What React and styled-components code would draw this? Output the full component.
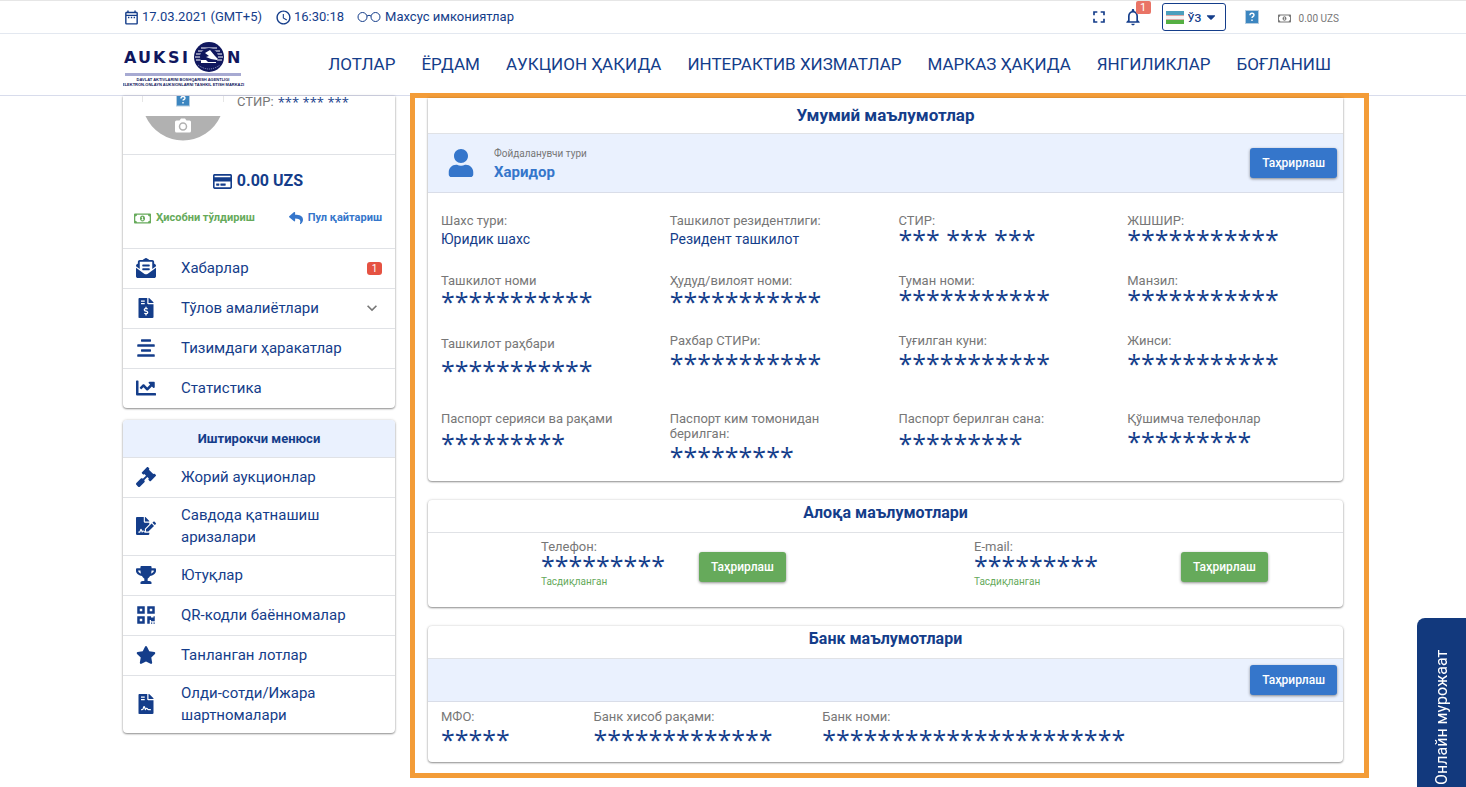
import React from "react";
import styled, { createGlobalStyle } from "styled-components";
import {
  FaEnvelopeOpenText,
  FaFileInvoiceDollar,
  FaAlignCenter,
  FaChartLine,
  FaGavel,
  FaFileSignature,
  FaTrophy,
  FaQrcode,
  FaStar,
  FaFileContract,
  FaRegCreditCard,
  FaReply,
  FaRegMoneyBillAlt,
  FaUser,
  FaCaretDown,
} from "react-icons/fa";
import {
  MdOutlineDateRange,
  MdAccessTime,
  MdFullscreen,
  MdNotificationsNone,
  MdExpandMore,
} from "react-icons/md";

const navy = "#143d8a";
const blue = "#3576cb";
const green = "#66aa5b";
const pale = "#eaf1fe";
const line = "#e0e2e6";
const grey = "#777";

const GlobalStyle = createGlobalStyle`
  * { box-sizing: border-box; }
  body {
    margin: 0;
    background: #fff;
    color: ${navy};
    font: 13px/20px Roboto, "Liberation Sans", sans-serif;
  }
  h2, h3, ul, dl, dd, p { margin: 0; padding: 0; }
  ul { list-style: none; }
  a { color: inherit; text-decoration: none; }
  button, select { font: inherit; color: inherit; }
  svg { display: block; flex: none; }
`;

const Wrap = styled.div`
  max-width: 1220px;
  margin: 0 auto;
`;

const Header = styled.header`
  background: #fff;
  border-top: 1px solid #e6e6e6;
  border-bottom: 1px solid #d8dcec;
`;

const TopBar = styled.div`
  border-bottom: 1px solid #e3e8f0;
`;

const TopBarInner = styled(Wrap)`
  display: flex;
  justify-content: space-between;
  height: 32px;
  align-items: center;
`;

const TopGroup = styled.div`
  display: flex;
  align-items: center;
  gap: 13px;
`;

const TopItem = styled.span`
  display: flex;
  align-items: center;
  gap: 2px;
`;

const TopLink = styled.a`
  display: flex;
  align-items: center;
  gap: 4px;
`;

const TopTools = styled.div`
  display: flex;
  align-items: center;
  gap: 19px;
  padding-right: 4px;
`;

const TopButtons = styled.div`
  display: flex;
  align-items: center;
  gap: 14px;
`;

const IconButton = styled.button`
  position: relative;
  display: flex;
  padding: 0;
  border: 0;
  background: none;
  cursor: pointer;
`;

const Bubble = styled.span`
  position: absolute;
  top: -6px;
  right: -8px;
  width: 15px;
  border-radius: 2px;
  background: #e97466;
  color: #fff;
  font-size: 11px;
  line-height: 13px;
  text-align: center;
`;

const Language = styled.label`
  position: relative;
  display: flex;
  align-items: center;
  height: 28px;
  border: 1px solid ${navy};
  border-radius: 3px;
  svg {
    position: absolute;
    pointer-events: none;
  }
  svg:first-child { left: 3px; }
  svg:last-child { right: 7px; }
`;

const LanguageSelect = styled.select`
  width: 62px;
  height: 26px;
  padding: 3px 0 0 25px;
  border: 0;
  background: none;
  appearance: none;
  font-size: 11px;
  font-weight: 500;
`;

const Account = styled.span`
  display: flex;
  align-items: center;
  gap: 8px;
  padding-top: 3px;
  color: ${grey};
  font-size: 10px;
`;

const NavInner = styled(Wrap)`
  display: flex;
  justify-content: space-between;
  align-items: center;
  height: 61px;
  padding-right: 12px;
`;

const Nav = styled.nav`
  display: flex;
  gap: 26px;
  font-size: 17px;
  line-height: 24px;
  padding-bottom: 2px;
  white-space: nowrap;
`;

const Content = styled(Wrap)`
  display: grid;
  grid-template-columns: 272px minmax(0, 1fr);
  gap: 15px;
  align-items: start;
`;

const Sidebar = styled.aside`
  display: flex;
  flex-direction: column;
  gap: 12px;
`;

const Card = styled.section`
  border-radius: ${(p) => (p.$joined ? "0 0 4px 4px" : "4px")};
  background: #fff;
  box-shadow: 0 1px 2px rgba(0, 0, 0, 0.4), 0 0 3px rgba(0, 0, 0, 0.16);
`;

const Profile = styled.div`
  display: flex;
  gap: 13px;
  height: 58px;
  padding-left: 19px;
`;

const ProfileId = styled.p`
  display: flex;
  gap: 4px;
  height: 12px;
  align-items: center;
  color: ${grey};
`;

const Balance = styled.div`
  display: flex;
  flex-direction: column;
  justify-content: space-between;
  height: 94px;
  padding: 16px 13px 20px 11px;
  border-top: 1px solid ${line};
`;

const Amount = styled.p`
  display: flex;
  justify-content: center;
  align-items: center;
  gap: 5px;
  font-size: 16px;
  font-weight: 700;
`;

const BalanceLinks = styled.div`
  display: flex;
  justify-content: space-between;
`;

const BalanceLink = styled.a`
  display: flex;
  align-items: center;
  gap: 5px;
  color: ${(p) => p.$color};
  font-size: 11px;
  font-weight: 700;
`;

const MenuTitle = styled.h2`
  padding: 8px;
  border-radius: 4px 4px 0 0;
  background: ${pale};
  font-size: 13px;
  line-height: 21px;
  text-align: center;
`;

const MenuLink = styled.a`
  display: grid;
  grid-template-columns: 46px 1fr auto;
  align-items: center;
  column-gap: 12px;
  min-height: 40px;
  padding: 6px 13px 7px 0;
  border-top: 1px solid ${line};
  font-size: 15px;
  line-height: 22px;
  svg {
    width: auto;
    height: 20px;
    justify-self: center;
  }
`;

const MenuBadge = styled.span`
  width: 15px;
  border-radius: 3px;
  background: #e55242;
  color: #fff;
  font-size: 10px;
  line-height: 13px;
  text-align: center;
`;

const Frame = styled.main`
  position: relative;
  display: flex;
  flex-direction: column;
  gap: 19px;
  margin: -3px -26px 9px 0;
  padding: 0 21px 11px 13px;
  border: 5px solid #f39c38;
  background: #fff;
`;

const CardTitle = styled.h3`
  padding: ${(p) => (p.$first ? "4px 0 5px" : "0 0 6px")};
  border-bottom: 1px solid ${line};
  font-size: ${(p) => (p.$first ? "17px" : "16px")};
  line-height: 26px;
  text-align: center;
`;

const Banner = styled.div`
  display: flex;
  align-items: center;
  gap: 19px;
  height: ${(p) => (p.$tall ? "59px" : "43px")};
  padding: 0 6px 0 19px;
  border-bottom: 1px solid #d9dde8;
  background: ${pale};
`;

const UserKind = styled.p`
  font-size: 15px;
  font-weight: 700;
  line-height: 18px;
  color: ${blue};
`;

const UserKindLabel = styled.span`
  display: block;
  font-size: 10px;
  font-weight: 400;
  color: ${grey};
`;

const EditButton = styled.button`
  height: 30px;
  padding: 0 12px;
  border: 0;
  border-radius: 3px;
  background: ${(p) => p.$color};
  box-shadow: 0 1px 3px rgba(0, 0, 0, 0.45);
  color: #fff;
  font-size: 12px;
  font-weight: 500;
  cursor: pointer;
`;

const Push = styled.div`
  margin-left: auto;
`;

const FieldGrid = styled.dl`
  display: grid;
  grid-template-columns: repeat(4, 1fr);
  grid-template-rows: 60px 60px 78px auto;
  padding: 20px 0 14px 13px;
  margin-right: -13px;
`;

const Field = styled.div`
  display: flex;
  flex-direction: column;
  gap: ${(p) => (p.$gap || 0) + "px"};
  padding: ${(p) => (p.$low ? "3px" : "0")} 45px 0 0;
`;

const Label = styled.dt`
  font-size: 13px;
  line-height: 15px;
  color: ${grey};
`;

const Value = styled.dd`
  font-size: 14px;
  line-height: 22px;
`;

const Masked = styled.dd`
  height: 22px;
  font-family: "Open Sans", "Noto Sans", sans-serif;
  font-size: 25px;
  line-height: 22px;
  white-space: nowrap;
`;

const MaskedSmall = styled.span`
  color: ${navy};
  font-family: "Open Sans", "Noto Sans", sans-serif;
  font-size: 13px;
  line-height: 20px;
`;

const Contacts = styled.div`
  display: grid;
  grid-template-columns: 158fr 275fr 207fr 162fr;
  align-items: start;
  justify-items: start;
  padding: 6px 0 20px 113px;
`;

const ContactButton = styled.div`
  padding-top: 13px;
`;

const Confirmed = styled.dd`
  font-size: 10px;
  line-height: 11px;
  color: ${green};
`;

const BankGrid = styled.dl`
  display: grid;
  grid-template-columns: 2fr 3fr 7fr;
  padding: 7px 0 12px 13px;
  margin-right: -13px;
`;

const SupportTab = styled.button`
  position: fixed;
  right: 0;
  bottom: 0;
  width: 49px;
  height: 169px;
  padding: 0 0 2px;
  border: 0;
  border-radius: 8px 0 0 0;
  background: #12397d;
  color: #fff;
  font-size: 16px;
  cursor: pointer;
`;

const SupportText = styled.span`
  display: block;
  width: 49px;
  height: 167px;
  line-height: 49px;
  text-align: left;
  writing-mode: vertical-rl;
  transform: rotate(180deg);
`;

function Logo() {
  return (
    <svg width="122" height="48" viewBox="1 2 122 48" role="img" aria-label="Auksion">
      <g fill="#10175e" fontFamily="'DejaVu Sans', sans-serif" fontWeight="700">
        <text x="2 16 31 46 60" y="24" fontSize="16">AUKSI</text>
        <text x="105" y="24" fontSize="16">N</text>
        <text x="61" y="42" fontSize="4" textAnchor="middle" fontFamily="'Liberation Sans', sans-serif">
          DAVLAT AKTIVLARINI BOSHQARISH AGENTLIGI
        </text>
        <text x="61" y="47" fontSize="4" textAnchor="middle" fontFamily="'Liberation Sans', sans-serif">
          ELEKTRON-ONLAYN AUKSIONLARNI TASHKIL ETISH MARKAZI
        </text>
      </g>
      <rect x="3" y="34" width="116" height="3" fill="#a7aad2" />
      <circle cx="87" cy="18" r="15" fill="#10175e" />
      <path d="M79 9h16M76 12h6M92 12h6M74 15h6M94 15h6M73 18h6M95 18h6M74 21h6M94 21h6" stroke="#fff" strokeWidth="1" />
      <circle cx="87" cy="18" r="9" fill="#10175e" />
      <path d="M83 14l5-3 5 6 3 3-1 1-6-1-5-2 3-1z" fill="#fff" />
      <path d="M79 21h5l2 2h8v1H79z" fill="#fff" />
      <path d="M76 26q11 8 22 0" fill="none" stroke="#9ba0cb" strokeWidth="1" strokeDasharray="1 1" />
    </svg>
  );
}

function Glasses() {
  return (
    <svg width="24" height="12" viewBox="0 0 24 12" fill="none" stroke={navy}>
      <circle cx="5.5" cy="6" r="4.5" />
      <circle cx="18.5" cy="6" r="4.5" />
      <path d="M10 5q2-1.500 4 0" />
    </svg>
  );
}

function MissingImage() {
  return (
    <svg width="14" height="14" viewBox="0 0 14 14">
      <rect x="0.5" y="0.5" width="13" height="13" fill="#3c86c0" stroke="#b5cde0" />
      <path d="M5 5.200q0-2 2-2t2 1.800q0 1-1 1.500t-1 1.500M7 9.500v1.500" fill="none" stroke="#fff" strokeWidth="1.400" />
    </svg>
  );
}

function Flag() {
  return (
    <svg width="18" height="13" viewBox="0 0 18 13">
      <rect width="18" height="13" fill="#f4f4f4" />
      <rect width="18" height="4" fill="#4b9fbd" />
      <path d="M0 4.500h18M0 8.500h18" stroke="#dcaaa8" />
      <rect y="9" width="18" height="4" fill="#55b043" />
    </svg>
  );
}

function Avatar() {
  return (
    <svg width="82" height="46" viewBox="0 0 82 46">
      <rect x="34.500" y="-3" width="13" height="13" fill="#3c86c0" stroke="#b5cde0" />
      <path d="M39 2.500q0-2 2-2t2 1.500q0 1-1 1.500t-1 1M41 6v1.500" fill="none" stroke="#fff" strokeWidth="1.400" />
      <path d="M0.500 0v6M81.500 0v6" stroke="#e6e6e6" />
      <path d="M3.500 20h75a41 41 0 0 1-75 0z" fill="#b1b1b1" />
      <path d="M34.500 24.500h3l1.500-2h4l1.500 2h3q1.500 0 1.500 1.500v9q0 1.500-1.500 1.500h-13q-1.500 0-1.500-1.500v-9q0-1.500 1.500-1.500z" fill="#fff" />
      <circle cx="41" cy="30.500" r="3.500" fill="none" stroke="#b1b1b1" strokeWidth="1.500" />
    </svg>
  );
}

const nav = ["ЛОТЛАР", "ЁРДАМ", "АУКЦИОН ҲАҚИДА", "ИНТЕРАКТИВ ХИЗМАТЛАР", "МАРКАЗ ҲАҚИДА", "ЯНГИЛИКЛАР", "БОҒЛАНИШ"];

const accountMenu = [
  { icon: FaEnvelopeOpenText, text: "Хабарлар", extra: <MenuBadge>1</MenuBadge> },
  { icon: FaFileInvoiceDollar, text: "Тўлов амалиётлари", extra: <MdExpandMore color={grey} /> },
  { icon: FaAlignCenter, text: "Тизимдаги ҳаракатлар" },
  { icon: FaChartLine, text: "Статистика" },
];

const memberMenu = [
  { icon: FaGavel, text: "Жорий аукционлар" },
  { icon: FaFileSignature, text: "Савдода қатнашиш аризалари" },
  { icon: FaTrophy, text: "Ютуқлар" },
  { icon: FaQrcode, text: "QR-кодли баённомалар" },
  { icon: FaStar, text: "Танланган лотлар" },
  { icon: FaFileContract, text: "Олди-сотди/Ижара шартномалари" },
];

const eleven = "*".repeat(11);
const nine = "*".repeat(9);

const fields = [
  { label: "Шахс тури:", value: "Юридик шахс" },
  { label: "Ташкилот резидентлиги:", value: "Резидент ташкилот" },
  { label: "СТИР:", masked: "*** *** ***" },
  { label: "ЖШШИР:", masked: eleven },
  { label: "Ташкилот номи", masked: eleven, gap: 2 },
  { label: "Ҳудуд/вилоят номи:", masked: eleven, gap: 2 },
  { label: "Туман номи:", masked: eleven },
  { label: "Манзил:", masked: eleven },
  { label: "Ташкилот раҳбари", masked: eleven, gap: 8, low: true },
  { label: "Рахбар СТИРи:", masked: eleven, gap: 4 },
  { label: "Туғилган куни:", masked: eleven, gap: 4 },
  { label: "Жинси:", masked: eleven, gap: 4 },
  { label: "Паспорт серияси ва рақами", masked: nine, gap: 6 },
  { label: "Паспорт ким томонидан берилган:", masked: nine, gap: 4 },
  { label: "Паспорт берилган сана:", masked: nine, gap: 6 },
  { label: "Қўшимча телефонлар", masked: nine, gap: 4 },
];

function Menu({ items }) {
  return (
    <ul>
      {items.map(({ icon: Icon, text, extra }) => (
        <li key={text}>
          <MenuLink href="#">
            <Icon />
            <span>{text}</span>
            {extra}
          </MenuLink>
        </li>
      ))}
    </ul>
  );
}

function FieldItem({ label, value, masked, gap, low }) {
  return (
    <Field $gap={gap} $low={low}>
      <Label>{label}</Label>
      {value ? <Value>{value}</Value> : <Masked>{masked}</Masked>}
    </Field>
  );
}

function Contact({ label }) {
  return (
    <>
      <dl>
        <Label>{label}</Label>
        <Masked>{nine}</Masked>
        <Confirmed>Тасдиқланган</Confirmed>
      </dl>
      <ContactButton>
        <EditButton $color={green}>Таҳрирлаш</EditButton>
      </ContactButton>
    </>
  );
}

export default function App() {
  return (
    <>
      <GlobalStyle />
      <Header>
        <TopBar>
          <TopBarInner>
            <TopGroup>
              <TopItem><MdOutlineDateRange size={17} />17.03.2021 (GMT+5)</TopItem>
              <TopItem><MdAccessTime size={17} />16:30:18</TopItem>
              <TopLink href="#"><Glasses />Махсус имкониятлар</TopLink>
            </TopGroup>
            <TopTools>
              <TopButtons>
                <IconButton aria-label="Fullscreen"><MdFullscreen size={20} /></IconButton>
                <IconButton aria-label="Notifications">
                  <MdNotificationsNone size={20} />
                  <Bubble>1</Bubble>
                </IconButton>
              </TopButtons>
              <Language>
                <Flag />
                <LanguageSelect aria-label="Language" defaultValue="uz">
                  <option value="uz">ЎЗ</option>
                </LanguageSelect>
                <FaCaretDown size={14} />
              </Language>
              <MissingImage />
              <Account><FaRegMoneyBillAlt size={13} />0.00 UZS</Account>
            </TopTools>
          </TopBarInner>
        </TopBar>
        <NavInner>
          <a href="#"><Logo /></a>
          <Nav>
            {nav.map((text) => (
              <a key={text} href="#">{text}</a>
            ))}
          </Nav>
        </NavInner>
      </Header>

      <Content>
        <Sidebar>
          <Card $joined>
            <Profile>
              <Avatar />
              <ProfileId>СТИР: <MaskedSmall>*** *** ***</MaskedSmall></ProfileId>
            </Profile>
            <Balance>
              <Amount><FaRegCreditCard size={19} />0.00 UZS</Amount>
              <BalanceLinks>
                <BalanceLink href="#" $color={green}><FaRegMoneyBillAlt size={17} />Ҳисобни тўлдириш</BalanceLink>
                <BalanceLink href="#" $color={blue}><FaReply size={14} />Пул қайтариш</BalanceLink>
              </BalanceLinks>
            </Balance>
            <Menu items={accountMenu} />
          </Card>
          <Card>
            <MenuTitle>Иштирокчи менюси</MenuTitle>
            <Menu items={memberMenu} />
          </Card>
        </Sidebar>

        <Frame>
          <Card $joined>
            <CardTitle $first>Умумий маълумотлар</CardTitle>
            <Banner $tall>
              <FaUser size={28} color={blue} />
              <UserKind><UserKindLabel>Фойдаланувчи тури</UserKindLabel>Харидор</UserKind>
              <Push><EditButton $color={blue}>Таҳрирлаш</EditButton></Push>
            </Banner>
            <FieldGrid>
              {fields.map((f) => <FieldItem key={f.label} {...f} />)}
            </FieldGrid>
          </Card>

          <Card>
            <CardTitle>Алоқа маълумотлари</CardTitle>
            <Contacts>
              <Contact label="Телефон:" />
              <Contact label="E-mail:" />
            </Contacts>
          </Card>

          <Card>
            <CardTitle>Банк маълумотлари</CardTitle>
            <Banner>
              <Push><EditButton $color={blue}>Таҳрирлаш</EditButton></Push>
            </Banner>
            <BankGrid>
              <FieldItem label="МФО:" masked="*****" gap={4} />
              <FieldItem label="Банк хисоб рақами:" masked={"*".repeat(13)} gap={4} />
              <FieldItem label="Банк номи:" masked={"*".repeat(22)} gap={4} />
            </BankGrid>
          </Card>
        </Frame>
      </Content>

      <SupportTab><SupportText>Онлайн мурожаат</SupportText></SupportTab>
    </>
  );
}
